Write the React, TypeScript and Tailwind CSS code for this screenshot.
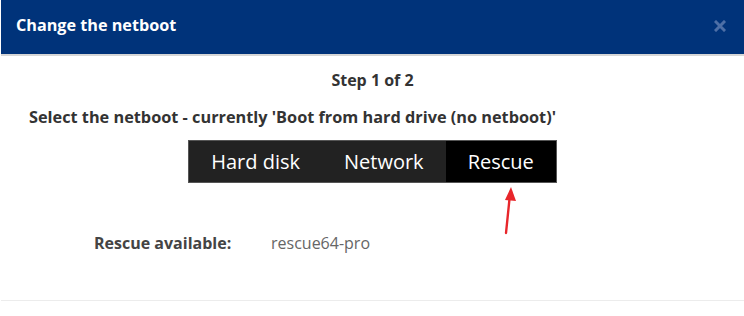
import React from "react";

const options = ["Hard disk", "Network", "Rescue"];

export default function App() {
  const selected = "Rescue";

  return (
    <div className="w-[744px] h-[316px] bg-white pl-px" style={{ fontFamily: '"Open Sans", "Liberation Sans", sans-serif' }}>
      <div className="h-[56px] bg-[#00337a] border-b-2 border-[#d6d6d6] flex items-center justify-between pl-[15px] pr-[18px]">
        <span className="text-white font-bold text-[16.2px] -mt-[4px]">Change the netboot</span>
        <svg width="12" height="12" viewBox="0 0 12 12" className="-mt-[2px]">
          <path d="M2 2 L10 10 M10 2 L2 10" stroke="#4d6fa6" strokeWidth="3" strokeLinecap="square" />
        </svg>
      </div>

      <div className="h-[245px] border-b border-[#ececec] relative">
        <div className="pt-[12px] text-center text-[16px] leading-[24px] font-bold text-[#333]">Step 1 of 2</div>
        <div className="pt-[13px] pl-[28px] text-[16.3px] leading-[24px] font-bold text-[#333]">
          Select the netboot - currently 'Boot from hard drive (no netboot)'
        </div>

        <div className="flex justify-center pt-[11px]">
          <div className="flex h-[43px] border border-[#555] bg-[#222]">
            {options.map((o) => (
              <div
                key={o}
                className={`flex items-center px-[22px] text-[20px] text-white ${o === selected ? "bg-black" : ""}`}
              >
                {o}
              </div>
            ))}
          </div>
        </div>

        <svg className="absolute left-[496px] top-[130px]" width="24" height="50" viewBox="0 0 24 50">
          <path d="M9 47 L13 8" stroke="#e8262b" strokeWidth="2.4" strokeLinecap="round" />
          <path d="M14 1 L19 15 L8 14 Z" fill="#e8262b" />
        </svg>

        <div className="flex items-center pt-[48px] pl-[93px] text-[16px] leading-[24px]">
          <span className="font-bold text-[#444] w-[177px]">Rescue available:</span>
          <span className="text-[#666]">rescue64-pro</span>
        </div>
      </div>
    </div>
  );
}
